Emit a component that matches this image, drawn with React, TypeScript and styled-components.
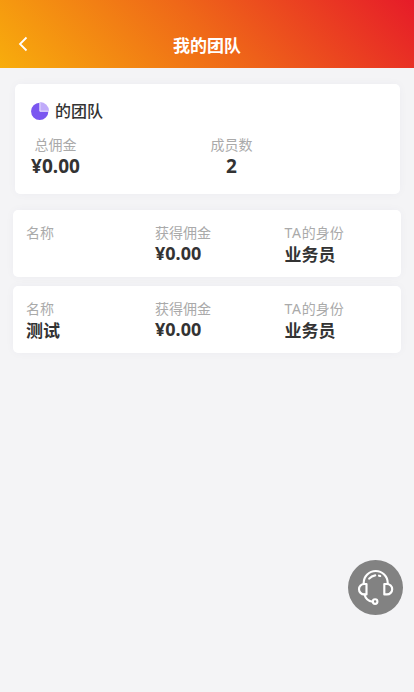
import React from "react";
import styled, { createGlobalStyle } from "styled-components";

const Global = createGlobalStyle`
  * { box-sizing: border-box; }
  body {
    margin: 0;
    background: #f4f4f6;
    color: #333;
    font-family: "Noto Sans", "Noto Sans CJK SC", sans-serif;
  }
`;

const Page = styled.div`
  min-height: 692px;
  background: #f4f4f6;
`;

const Header = styled.header`
  display: grid;
  grid-template-columns: 46px 1fr 46px;
  align-items: center;
  height: 68px;
  padding-top: 22px;
  background: linear-gradient(45deg, #f8ad0c 0%, #ef6818 50%, #e61b29 100%);
  color: #fff;
`;

const BackButton = styled.button`
  display: flex;
  padding: 0 0 2px 18px;
  border: 0;
  background: none;
  color: inherit;
`;

const Title = styled.h1`
  margin: 0;
  padding-top: 2px;
  font-size: 17px;
  line-height: 24px;
  font-weight: 700;
  text-align: center;
`;

const Card = styled.section`
  background: #fff;
  border-radius: 5px;
  box-shadow: 0 0 10px rgba(60, 50, 100, 0.035);
`;

const Summary = styled(Card)`
  height: 110px;
  margin: 16px 14px 16px 15px;
  padding: 15px 16px 0;
`;

const SummaryTitle = styled.div`
  display: flex;
  align-items: center;
  gap: 6px;
  height: 24px;
  font-size: 16px;
  line-height: 24px;
  font-weight: 500;
`;

const Stats = styled.div`
  display: grid;
  grid-template-columns: 176px 1fr;
  justify-items: start;
  margin-top: 12px;
`;

const Stat = styled.div`
  display: flex;
  flex-direction: column;
  align-items: center;
  min-width: 49px;
`;

const Label = styled.div`
  height: 20px;
  color: #aaa;
  font-size: 14px;
  line-height: 20px;
  white-space: nowrap;
`;

const Latin = styled.span`
  letter-spacing: 0.7px;
`;

const Value = styled.div<{ $size: number; $line?: number }>`
  height: 22px;
  font-size: ${(p) => p.$size}px;
  line-height: ${(p) => p.$line ?? 22}px;
  font-weight: 700;
  white-space: nowrap;
`;

const Members = styled.div`
  display: grid;
  gap: 9px;
  margin: 0 13px;
`;

const MemberRow = styled(Card)`
  display: grid;
  grid-template-columns: 129px 129.5px 1fr;
  height: 67px;
  padding: 13px 0 0 13px;
`;

const SupportButton = styled.button`
  position: fixed;
  left: 348px;
  top: 560px;
  display: flex;
  width: 55px;
  height: 55px;
  padding: 0;
  border: 0;
  border-radius: 50%;
  background: #828282;
`;

const members = [
  { name: "", commission: "¥0.00", role: "业务员" },
  { name: "测试", commission: "¥0.00", role: "业务员" },
];

const BackIcon = () => (
  <svg width="10" height="16" viewBox="0 0 10 16" fill="none" stroke="#fff" strokeWidth="1.8">
    <path d="M8.500 1.500 2 8l6.500 6.500" />
  </svg>
);

const PieIcon = () => (
  <svg width="18" height="20" viewBox="0 0 18 20">
    <path d="M8.700 1.700A8.650 8.650 0 1 0 17.350 10.400H8.700Z" fill="#7a56f0" />
    <path d="M9.100 1a9 8.900 0 0 1 8.900 8.900H9.100Z" fill="#c0abfa" />
    <path d="M8.900 1.200V10.100H17.800" fill="none" stroke="#e4dcff" strokeWidth="0.9" />
  </svg>
);

const HeadsetIcon = () => (
  <svg width="55" height="55" viewBox="0 0 55 55" fill="none" stroke="#fff" strokeWidth="2.15" strokeLinecap="round" strokeLinejoin="round">
    <path d="M15.700 24v-1a12 12 0 0 1 24 0V24" />
    <path d="M18.500 24h-2.300a5.100 5.100 0 0 0 0 10.400h2.300Z" />
    <path d="M36.300 24h2.700a5.200 5.200 0 0 1 0 10.400h-2.700Z" />
    <path d="M16.500 34.500c1 4 4 6.700 8.200 7.200" />
    <circle cx="27.100" cy="41.500" r="2.300" />
    <path d="M21.200 18.600c1.600-1.900 3.600-2.900 6-3.200M31 15.700l1.200.300" />
  </svg>
);

export default function App() {
  return (
    <Page>
      <Global />
      <Header>
        <BackButton aria-label="返回"><BackIcon /></BackButton>
        <Title>我的团队</Title>
      </Header>
      <Summary>
        <SummaryTitle><PieIcon /><span>的团队</span></SummaryTitle>
        <Stats>
          <Stat><Label>总佣金</Label><Value $size={19}>¥0.00</Value></Stat>
          <Stat><Label>成员数</Label><Value $size={19}>2</Value></Stat>
        </Stats>
      </Summary>
      <Members>
        {members.map((m, i) => (
          <MemberRow key={i}>
            <div><Label>名称</Label><Value $size={17} $line={24}>{m.name}</Value></div>
            <div><Label>获得佣金</Label><Value $size={18} $line={21}>{m.commission}</Value></div>
            <div><Label><Latin>TA</Latin>的身份</Label><Value $size={17} $line={24}>{m.role}</Value></div>
          </MemberRow>
        ))}
      </Members>
      <SupportButton aria-label="客服"><HeadsetIcon /></SupportButton>
    </Page>
  );
}
